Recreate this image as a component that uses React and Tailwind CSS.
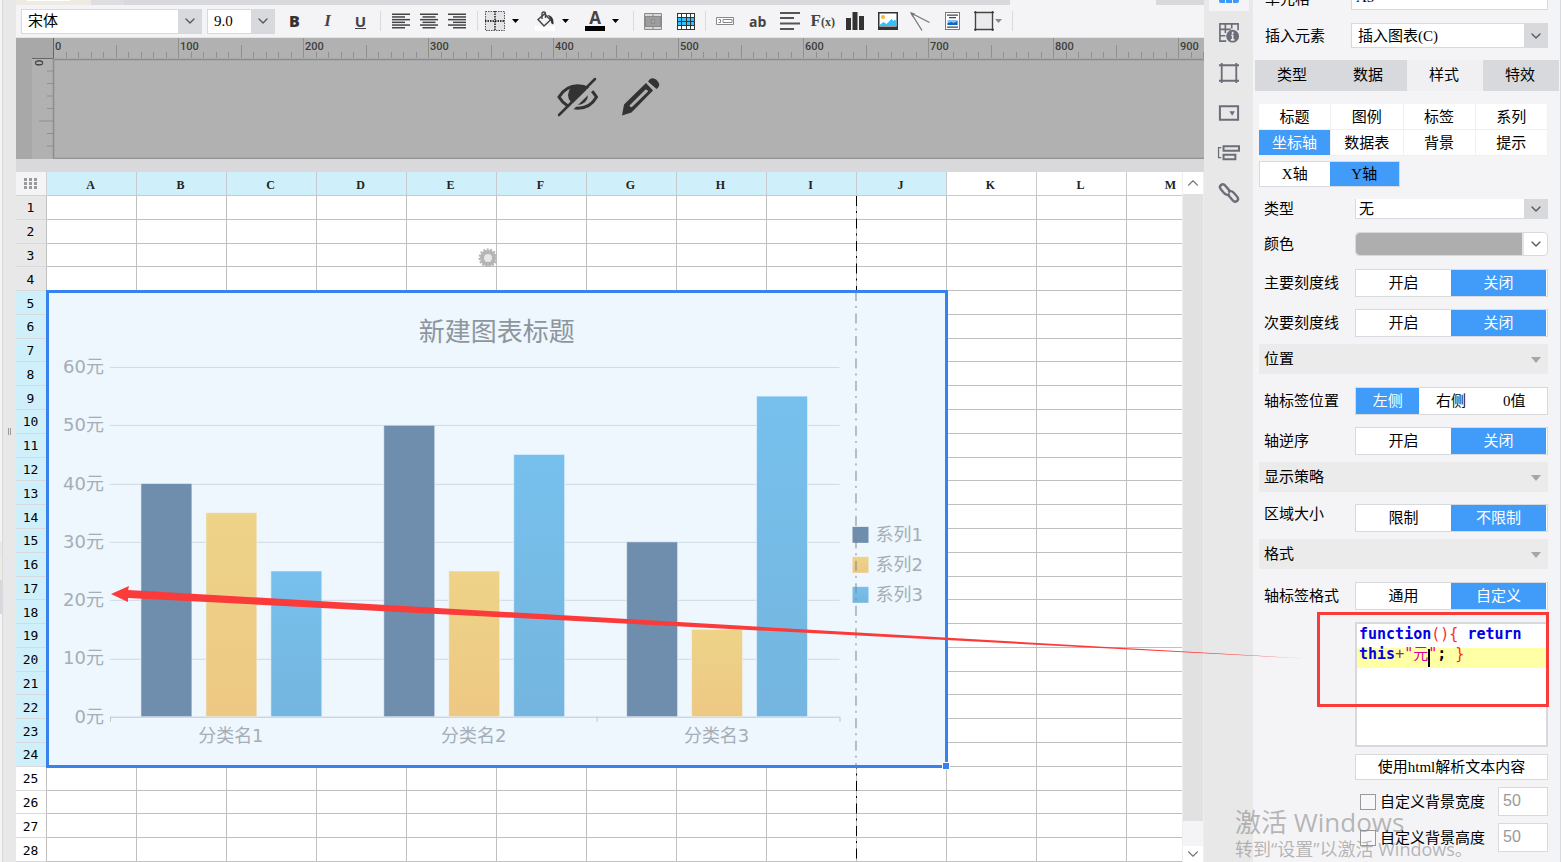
import { useState } from 'react'
import clsx from 'clsx'
import { ChevronDown, ChevronUp } from 'lucide-react'

const COLUMNS = ['A', 'B', 'C', 'D', 'E', 'F', 'G', 'H', 'I', 'J', 'K', 'L', 'M']
const ROWS = Array.from({ length: 28 }, (_, i) => i + 1)

const SERIES = [
  { name: '系列1', fill: '#6f8dac', values: [40, 50, 30] },
  { name: '系列2', fill: 'url(#yellow)', values: [35, 25, 15] },
  { name: '系列3', fill: 'url(#blue)', values: [25, 45, 55] },
]
const CATEGORIES = ['分类名1', '分类名2', '分类名3']

const yOf = (value) => 426 - (value * 350) / 60

function Caret({ className }) {
  return (
    <svg className={clsx('w-[7px] h-[4px] shrink-0', className)} viewBox="0 0 7 4" fill="currentColor" aria-hidden="true">
      <path d="M0 0h7L3.5 4z" />
    </svg>
  )
}

function SelectBox({ id, label, options, className }) {
  return (
    <div className={clsx('relative border border-[#d7d9dd]', className)}>
      <select
        id={id}
        aria-label={label}
        className="block w-full h-full appearance-none bg-white pl-1.5 pr-6 text-[15px] leading-[18px] text-black outline-none"
      >
        {options.map((option) => (
          <option key={option}>{option}</option>
        ))}
      </select>
      <span className="pointer-events-none absolute inset-y-0 right-0 flex w-[23px] items-center justify-center bg-[#d7d9dd]">
        <ChevronDown className="w-4 h-4 text-[#55585e]" strokeWidth={2} />
      </span>
    </div>
  )
}

function Separator({ className }) {
  return <span className={clsx('w-px h-5 shrink-0 bg-[#d9dade]', className)} />
}

function ToolButton({ title, className, children }) {
  return (
    <button type="button" title={title} aria-label={title} className={clsx('flex h-7 shrink-0 items-center', className)}>
      {children}
    </button>
  )
}

function AlignIcon({ kind }) {
  const lines = [18, 13, 18, 13, 18, 13]
  return (
    <svg width="18" height="16" viewBox="0 0 18 16" aria-hidden="true">
      {lines.map((w, i) => {
        const x = kind === 'left' ? 0 : kind === 'right' ? 18 - w : (18 - w) / 2
        return <rect key={i} x={x} y={i * 2.7 + 0.5} width={w} height="1.5" fill="#444" />
      })}
    </svg>
  )
}

function Toolbar() {
  return (
    <div className="flex h-[33px] shrink-0 items-center bg-[#f4f4f7] pl-[5px] border-b border-[#e4e4e8]">
      <SelectBox label="字体" options={['宋体']} className="w-[181px] h-[25px] shrink-0" />
      <SelectBox label="字号" options={['9.0']} className="w-[68px] h-[25px] shrink-0 ml-[5px]" />

      <ToolButton title="加粗" className="ml-[3px] w-[33px] justify-center">
        <span className="font-[Open_Sans] text-[16px] font-extrabold text-[#333]">B</span>
      </ToolButton>
      <ToolButton title="倾斜" className="w-[33px] justify-center">
        <span className="font-[Liberation_Serif] text-[17px] font-bold italic text-[#444]">I</span>
      </ToolButton>
      <ToolButton title="下划线" className="w-[33px] justify-center">
        <span className="border-b border-[#444] font-[Open_Sans] text-[15px] leading-[14px] font-bold text-[#444]">U</span>
      </ToolButton>
      <Separator className="ml-[3px]" />

      <ToolButton title="左对齐" className="ml-[6px] w-7 justify-center"><AlignIcon kind="left" /></ToolButton>
      <ToolButton title="居中" className="w-7 justify-center"><AlignIcon kind="center" /></ToolButton>
      <ToolButton title="右对齐" className="w-7 justify-center"><AlignIcon kind="right" /></ToolButton>
      <Separator className="ml-[6px]" />

      <ToolButton title="边框" className="ml-[7px] w-[50px] gap-[7px]">
        <svg width="20" height="20" viewBox="0 0 20 20" fill="none" stroke="#333" strokeDasharray="1.5 1" aria-hidden="true">
          <path d="M.5 .5h19v19H.5z" fill="#e4e4e8" stroke="#555" />
          <path d="M0 10h20M10 0v20" stroke="#000" strokeWidth="1.3" />
        </svg>
        <Caret className="text-black" />
      </ToolButton>
      <ToolButton title="填充颜色" className="w-[50px] gap-[7px]">
        <svg width="20" height="20" viewBox="0 0 20 20" fill="none" stroke="#444" strokeWidth="1.4" aria-hidden="true">
          <rect x="0" y="15" width="20" height="5" fill="#fff" stroke="none" />
          <path d="M3 8.500 9.500 3l6 6-6.500 6z" fill="#f4f4f7" />
          <path d="M7 8V2.500C7 .5 10.500 .5 10.500 2.500V7" />
          <path d="M12 4c4 0 7 3 6.500 9-1 .8-2-.2-2.500-2 0-3-1.500-5-4-7z" fill="#333" stroke="none" />
        </svg>
        <Caret className="text-black" />
      </ToolButton>
      <ToolButton title="字体颜色" className="w-[48px] gap-[7px]">
        <span className="flex h-5 w-5 flex-col items-center border-b-[5px] border-black">
          <span className="font-[Open_Sans] text-[17px] leading-[14px] font-bold text-[#444]">A</span>
        </span>
        <Caret className="text-black" />
      </ToolButton>
      <Separator />

      <ToolButton title="合并单元格" className="ml-[2px] w-[33px] justify-center">
        <svg width="18" height="17" viewBox="0 0 18 17" fill="none" stroke="#8a8a8a" aria-hidden="true">
          <path d="M.5 .5h17v16H.5z" fill="#d8d8d8" />
          <path d="M0 3.5h18M0 13.5h18M9 0v3M9 14v3" />
          <rect x="1.5" y="3.5" width="15" height="10" fill="#9d9d9d" />
          <path d="M7.500 6.500h3v4h-3z" fill="#a8a8a8" stroke="#8a8a8a" />
        </svg>
      </ToolButton>
      <ToolButton title="表格" className="w-[33px] justify-center">
        <svg width="18" height="17" viewBox="0 0 18 17" aria-hidden="true">
          <rect width="18" height="17" fill="#333" />
          {[1, 5, 9, 13].map((y) =>
            [1, 5, 10, 14].map((x) => (
              <rect key={`${x}-${y}`} x={x} y={y} width={x === 5 ? 4 : 3} height="3" fill={y === 5 || y === 9 ? '#35c0f8' : '#fff'} />
            ))
          )}
        </svg>
      </ToolButton>
      <Separator className="ml-[3px]" />

      <div className="ml-[3px] grid w-[260px] shrink-0 grid-cols-8">
        <ToolButton title="文本框" className="justify-center">
          <svg width="18" height="8" viewBox="0 0 18 8" fill="none" stroke="#888" aria-hidden="true">
            <path d="M.5 .5h17v7H.5z" fill="#fff" />
            <path d="M2.500 2.500h2v3h-2M7 2.500h9v3H7z" />
          </svg>
        </ToolButton>
        <ToolButton title="文本" className="justify-center">
          <span className="font-[Open_Sans] text-[14px] font-bold text-[#444]">ab</span>
        </ToolButton>
        <ToolButton title="段落" className="justify-center">
          <svg width="20" height="18" viewBox="0 0 20 18" fill="#555" aria-hidden="true">
            <path d="M0 0h20v2H0zM0 5h14v2H0zM0 10.500h20v2H0zM0 16h14v2H0z" />
          </svg>
        </ToolButton>
        <ToolButton title="公式" className="justify-center">
          <span className="font-[Liberation_Serif] text-[17px] font-bold text-[#444]">
            F<span className="text-[12px]">(x)</span>
          </span>
        </ToolButton>
        <ToolButton title="图表" className="justify-center">
          <svg width="18" height="18" viewBox="0 0 18 18" fill="#333" aria-hidden="true">
            <path d="M0 6h5v12H0zM6.500 0h5v18h-5zM13 4h5v14h-5z" />
          </svg>
        </ToolButton>
        <ToolButton title="图片" className="justify-center">
          <svg width="20" height="18" viewBox="0 0 20 18" aria-hidden="true">
            <rect x=".75" y=".75" width="18.5" height="16.5" fill="#fff" stroke="#333" strokeWidth="1.5" />
            <circle cx="5" cy="5" r="2" fill="#fbb829" />
            <path d="M1.500 13l4-3 3 2 5-5 2 2 1.500-1.500 1.500 2V14H1.500z" fill="#35c0f8" />
            <path d="M1 14.500h18v3H1z" fill="#333" />
          </svg>
        </ToolButton>
        <ToolButton title="斜线" className="justify-center">
          <svg width="20" height="19" viewBox="0 0 20 19" fill="none" stroke="#777" strokeWidth="1.3" aria-hidden="true">
            <path d="M1 1l18.500 9.500M1 1l11 17.500" />
            <path d="M0 0l5 1.500L2.500 5z" fill="#777" stroke="none" />
          </svg>
        </ToolButton>
        <ToolButton title="子报表" className="justify-center">
          <svg width="15" height="18" viewBox="0 0 15 18" aria-hidden="true">
            <rect x=".5" y=".5" width="14" height="17" fill="#fff" stroke="#777" />
            <path d="M2 2.500h11v1.300H2zM4 5h7v1.300H4zM2 14.500h11v1.300H2z" fill="#444" />
            <rect x="2.5" y="8" width="10" height="5" fill="#7ec3fa" />
            <path d="M2.500 13v-2l4-1 2 1 4-2v4z" fill="#1565c0" />
          </svg>
        </ToolButton>
      </div>
      <ToolButton title="悬浮元素" className="ml-[5px]">
        <svg width="21" height="20" viewBox="0 0 21 20" fill="none" stroke="#444" strokeWidth="1.4" aria-hidden="true">
          <path d="M2.500 2.500h15v15h-15z" fill="#ebebee" stroke="none" />
          <path d="M0 1.500h20M0 18.500h20M1.500 0v20M18.500 0v20" />
        </svg>
        <Caret className="text-[#888]" />
      </ToolButton>
      <Separator className="ml-[10px]" />
    </div>
  )
}

function Ruler() {
  const ticks = Array.from({ length: 93 }, (_, i) => i)
  return (
    <div className="relative h-[121px] shrink-0 overflow-hidden bg-[#b1b1b1]">
      <svg className="block h-full w-[1188px]" viewBox="0 0 1188 121" aria-hidden="true">
        <rect width="16" height="121" fill="#a8a8a8" />
        <rect width="37" height="20" fill="#a8a8a8" />
        {ticks.map((i) => {
          const x = Math.round(37 + i * 12.5) + 0.5
          const top = i % 10 === 0 ? 0 : i % 5 === 0 ? 7 : 14
          return <path key={i} d={`M${x} ${top}V20`} stroke="#8f8f8f" />
        })}
        {[1, 2, 3, 4, 5, 6, 7].map((i) => (
          <path key={i} d={`M${i === 5 ? 23 : 31} ${20.5 + i * 12.5}H37`} stroke="#8f8f8f" />
        ))}
        <path d="M16 20.500h21M37.500 0v20" stroke="#666" />
        <path d="M37 21.500h1151" stroke="#8c8c8c" strokeWidth="1.5" />
        <path d="M37.500 20v100" stroke="#8c8c8c" strokeWidth="1.5" />
        <path d="M37 120.300h1151" stroke="#8c8c8c" />
        {[0, 1, 2, 3, 4, 5, 6, 7, 8, 9].map((i) => (
          <text key={i} x={i === 9 ? 1164 : 39 + i * 125} y="12" fontSize="11" fontWeight="500" fontFamily="Roboto, sans-serif" fill="#3d3d3d">
            {i * 100}
          </text>
        ))}
        <text transform="translate(27 28) rotate(-90)" fontSize="11" fontWeight="500" fontFamily="Roboto, sans-serif" fill="#3d3d3d">0</text>
      </svg>
      <div className="absolute inset-x-0 top-[39px] flex justify-center gap-[22px] pr-[2px]">
        <button type="button" aria-label="隐藏" className="h-10 w-[42px]">
          <svg width="42" height="40" viewBox="0 0 42 40" fill="none" aria-hidden="true">
            <path d="M2 20C11 5 31 5 39.500 20C31 35 11 35 2 20z" stroke="#333" strokeWidth="3" />
            <circle cx="21" cy="18" r="10" fill="#333" />
            <path d="M11 14c-3 4-1 9 0 10" stroke="#b1b1b1" strokeWidth="1.5" />
            <path d="M5 40L42 4" stroke="#b1b1b1" strokeWidth="5" />
            <path d="M2 38L38 2" stroke="#333" strokeWidth="2.5" strokeLinecap="round" />
          </svg>
        </button>
        <button type="button" aria-label="编辑" className="h-10 w-10">
          <svg width="40" height="40" viewBox="0 0 40 40" fill="#333" aria-hidden="true">
            <path fillRule="evenodd" d="M1 38.500L3 27.500 25 6l7 7.500L10.500 35.500zM8.500 28.500q1 3 3 1L27 14.500q0-2-2.500-2z" />
            <path d="M27 4.500c3-5 7-3 9-1s4 5-.5 8.500z" />
          </svg>
        </button>
      </div>
    </div>
  )
}

function BarChart() {
  return (
    <svg className="block h-full w-full" viewBox="2 2 896 472" preserveAspectRatio="xMinYMin meet" fontFamily="'DejaVu Sans', 'Noto Sans CJK SC', sans-serif">
      <defs>
        <linearGradient id="yellow" x1="0" y1="0" x2="0" y2="1">
          <stop offset="0" stopColor="#eed388" />
          <stop offset="1" stopColor="#edc884" />
        </linearGradient>
        <linearGradient id="blue" x1="0" y1="0" x2="0" y2="1">
          <stop offset="0" stopColor="#77c0ed" />
          <stop offset="1" stopColor="#74b6df" />
        </linearGradient>
      </defs>

      <text x="450" y="50" fontSize="26" textAnchor="middle" fill="#8d959d">新建图表标题</text>

      {[60, 50, 40, 30, 20, 10, 0].map((value) => (
        <g key={value}>
          <path d={`M63 ${Math.round(yOf(value)) + 0.5}H793`} stroke={value === 0 ? '#bcc7d3' : '#d0dae4'} />
          <text x="57" y={yOf(value) + 6} fontSize="18" textAnchor="end" fill="#a5adb6">{value}元</text>
        </g>
      ))}
      <path d="M63.500 426v5M550.500 426v5M793.500 426v5" stroke="#bcc7d3" />

      {CATEGORIES.map((category, c) => (
        <g key={category}>
          {SERIES.map((series, s) => (
            <rect
              key={series.name}
              x={94 + c * 243 + s * 65}
              y={yOf(series.values[c])}
              width="51"
              height={426 - yOf(series.values[c])}
              fill={series.fill}
              stroke="#eef6fe"
              strokeOpacity="0.6"
            />
          ))}
          <text x={184 + c * 243} y="451" fontSize="18" textAnchor="middle" fill="#a5adb6">{category}</text>
        </g>
      ))}

      {SERIES.map((series, i) => (
        <g key={series.name}>
          <rect x="806" y={236 + i * 30} width="16" height="16" fill={series.fill} />
          <text x="829" y={250 + i * 30} fontSize="18" fill="#a5adb6">{series.name}</text>
        </g>
      ))}

      <path d="M809.500 0v476" stroke="#7b858e" strokeDasharray="10 5 2 5.5" />
    </svg>
  )
}

function Sheet() {
  return (
    <div className="flex min-h-0 flex-1">
      <div className="relative min-w-0 flex-1 overflow-hidden bg-white">
        <table className="h-full w-[1201px] table-fixed border-separate border-spacing-0">
          <thead>
            <tr>
              <th className="h-6 w-[31px] border-r border-b border-[#d0d2d6] bg-[#f4f4f7] p-0">
                <svg className="mx-auto" width="14" height="12" viewBox="0 0 14 12" fill="#999" aria-hidden="true">
                  <path d="M0 0h3v3H0zM5 0h3v3H5zM10 0h3v3h-3zM0 4h3v3H0zM5 4h3v3H5zM10 4h3v3h-3zM0 8h3v3H0zM5 8h3v3H5zM10 8h3v3h-3z" />
                </svg>
              </th>
              {COLUMNS.map((column, i) => (
                <th
                  key={column}
                  scope="col"
                  className={clsx(
                    'h-6 w-[90px] border-r border-b border-[#c8cacd] pt-[3px] pr-[2px] pb-0 pl-0 font-[Liberation_Serif] text-[12px] leading-4 font-bold text-[#222]',
                    i < 10 ? 'bg-[#cff0fb]' : 'bg-white'
                  )}
                >
                  {column}
                </th>
              ))}
            </tr>
          </thead>
          <tbody>
            {ROWS.map((row) => (
              <tr key={row}>
                <th
                  scope="row"
                  className={clsx(
                    'border-b border-r border-b-[#d8d9dc] border-r-[#c0c0c0] pt-[2px] pr-px pb-0 pl-0 font-[DejaVu_Sans_Mono] text-[13px] leading-4 font-normal text-black',
                    row < 5 ? 'bg-[#e8e8e8]' : row < 25 ? 'bg-[#cff0fb]' : 'bg-white'
                  )}
                >
                  {row}
                </th>
                {COLUMNS.map((column) => (
                  <td key={column} className="border-r border-b border-[#c0c0c0] p-0" />
                ))}
              </tr>
            ))}
          </tbody>
        </table>

        {/* floating layer: page break line, spinner and chart, snapped to the cells */}
        <div className="absolute inset-x-0 top-6 bottom-0 grid grid-cols-[31px_repeat(13,90px)] grid-rows-[repeat(28,minmax(0,1fr))]">
          <svg className="col-start-10 row-start-1 row-end-29 h-full w-px justify-self-end" aria-hidden="true">
            <line x1="0.5" y1="0" x2="0.5" y2="100%" stroke="#000" strokeWidth="2" strokeDasharray="10 5 2 5.5" />
          </svg>
          <svg className="col-start-6 row-start-3 justify-self-end self-end" width="20" height="20" viewBox="0 0 20 20" aria-hidden="true">
            <circle cx="11" cy="11" r="8.5" fill="none" stroke="#b5b5b5" strokeWidth="2" strokeDasharray="2 1.5" />
            <circle cx="11" cy="11" r="6" fill="#e8e8e8" stroke="#b5b5b5" strokeWidth="4" />
          </svg>
          <div className="relative col-start-2 col-span-10 row-start-5 row-end-25 -m-px border-[3px] border-[#3683ee] bg-[#eef6fe]">
            <BarChart />
            <span className="absolute -right-[5px] -bottom-[5px] h-2 w-2 border border-white bg-[#3683ee]" />
          </div>
        </div>
      </div>

      <div className="flex w-[22px] shrink-0 flex-col border-x border-[#eeeeee] bg-[#f4f4f7]">
        <button type="button" aria-label="向上滚动" className="flex h-[22px] items-center justify-center bg-white">
          <ChevronUp className="w-[18px] h-[18px] text-[#777]" strokeWidth={1.5} />
        </button>
        <div className="flex-1 bg-[#e1e1e1]" />
        <button type="button" aria-label="向下滚动" className="mt-[25px] flex h-4 items-center justify-center bg-white">
          <ChevronDown className="w-[18px] h-[18px] text-[#777]" strokeWidth={1.5} />
        </button>
      </div>
    </div>
  )
}

function RailButton({ label, children }) {
  return (
    <button type="button" aria-label={label} className="flex h-10 w-10 items-center justify-center">
      <svg width="20" height="20" viewBox="0 0 22 22" fill="none" stroke="#6b6e78" strokeWidth="2" className="overflow-visible" aria-hidden="true">
        {children}
      </svg>
    </button>
  )
}

function IconRail() {
  return (
    <nav className="flex w-[49px] shrink-0 flex-col items-center bg-[#e8e8e8]">
      <button type="button" aria-label="单元格元素" className="mb-[2px] flex h-[11px] w-10 justify-center bg-[#f4f4f7]">
        <svg width="20" height="4" viewBox="0 0 20 4" fill="#3d98f7" aria-hidden="true">
          <path d="M0 0h6v3H2Q0 3 0 1zM7 0h6v3H7zM14 0h6v1q0 2-2 2h-4z" />
        </svg>
      </button>
      <RailButton label="单元格属性">
        <path d="M8 20H1V1h20v7M1 7h12M7 1v10M14 1v5M1 14h6" strokeWidth="1.8" />
        <ellipse cx="15" cy="14.5" rx="7" ry="7" fill="#6b6e78" stroke="none" />
        <path d="M15 9.500v2.500M13.500 13.500H15v5M13 18.500h4" stroke="#e8e8e8" strokeWidth="1.8" />
      </RailButton>
      <RailButton label="悬浮元素">
        <path d="M0 2.500h22M0 19.500h22M3 0v22M19 0v22" strokeWidth="2" />
      </RailButton>
      <RailButton label="控件设置">
        <path d="M1 3.500h20v15H1z" strokeWidth="2.2" />
        <path d="M11.500 9h6l-3 5z" fill="#6b6e78" stroke="none" />
      </RailButton>
      <RailButton label="条件属性">
        <path d="M5 3.500h17v5H5zM5 13h13v5H5z" strokeWidth="2.200" />
        <path d="M2.500 5H-.5v11h3" strokeWidth="1.4" />
      </RailButton>
      <RailButton label="超级链接">
        <path d="M12.500 9.500L7 3C4-.5-1 3 2 7l4 4.500c2 2 4 2 5.500 0" strokeWidth="2.6" />
        <path d="M9.500 12.500L15 19c3 3.500 8 0 5-4l-4-4.500c-2-2-4-2-5.500 0" strokeWidth="2.6" />
      </RailButton>
    </nav>
  )
}

function Field({ label, htmlFor, className, children }) {
  return (
    <div className={clsx('flex items-center', className)}>
      <label htmlFor={htmlFor} className="w-[96px] shrink-0 pl-[5px] text-[15px] leading-5">{label}</label>
      {children}
    </div>
  )
}

function Segmented({ label, options, initial }) {
  const [active, setActive] = useState(initial)
  return (
    <div role="group" aria-label={label} className="flex h-full flex-1 border border-[#d7d9dd] bg-white pr-px">
      {options.map((option) => (
        <button
          key={option}
          type="button"
          aria-pressed={option === active}
          onClick={() => setActive(option)}
          className={clsx('flex-1 text-[15px] leading-5', option === active ? 'bg-[#419bf9] text-white' : 'text-black')}
        >
          {option}
        </button>
      ))}
    </div>
  )
}

function SectionHeader({ children }) {
  return (
    <button type="button" className="mt-[7px] flex h-[30px] w-full items-center justify-between bg-[#ebebeb] pt-px pl-[5px] pr-[7px] text-[15px]">
      {children}
      <svg width="10" height="6" viewBox="0 0 10 6" fill="#a6a6a6" aria-hidden="true">
        <path d="M0 0h10L5 6z" />
      </svg>
    </button>
  )
}

const TOKENS = /(function|return|this)|([(){}])|("[^"]*")|(\+)/g

function highlight(code) {
  const parts = []
  let last = 0
  for (const match of code.matchAll(TOKENS)) {
    if (match.index > last) parts.push(code.slice(last, match.index))
    const color = match[1] ? 'text-[#0000e6]' : match[2] ? 'font-normal text-[#ff2a1a]' : match[3] ? 'font-normal text-[#dc009c]' : 'font-normal text-[#804040]'
    parts.push(<span key={match.index} className={color}>{match[0]}</span>)
    last = match.index + match[0].length
  }
  parts.push(code.slice(last))
  return parts
}

function CodeEditor() {
  const [code, setCode] = useState('function(){ return\nthis+"元"; }')
  return (
    <div className="relative mt-3 ml-[96px] h-[125px] border-2 border-[#d7d9dd] bg-white font-[DejaVu_Sans_Mono,Noto_Sans_CJK_SC] text-[15px] leading-5">
      <div className="absolute inset-x-0 top-6 h-5 bg-[#ffffa6]" />
      <pre aria-hidden="true" className="relative whitespace-pre-wrap pl-[2px] font-[inherit] font-bold">{highlight(code)}</pre>
      <textarea
        aria-label="轴标签格式"
        spellCheck={false}
        value={code}
        onChange={(e) => setCode(e.target.value)}
        className="absolute inset-0 h-full w-full resize-none bg-transparent pl-[2px] text-transparent caret-black outline-none"
      />
      <span className="absolute left-[71px] top-[25px] h-[18px] w-[2px] bg-black" />
      <div className="pointer-events-none absolute -left-[40px] -top-[12px] -right-[3px] h-[95px] border-[3px] border-[#fb3a3a]" />
    </div>
  )
}

function SizeOption({ id, label }) {
  return (
    <div className="mt-[7px] ml-[96px] flex h-[29px] items-center">
      <input id={id} type="checkbox" className="ml-[5px] h-4 w-4 shrink-0 appearance-none border border-[#999] bg-[#f7f7f9] checked:bg-[#419bf9]" />
      <label htmlFor={id} className="ml-1 flex-1 text-[15px] leading-5 whitespace-nowrap">{label}</label>
      <input
        type="text"
        aria-label={label}
        defaultValue="50"
        className="h-full w-[50px] shrink-0 border border-[#d7d9dd] bg-white pl-1 pb-px font-[Liberation_Sans] text-[16px] text-[#999] outline-none"
      />
    </div>
  )
}

function PropertyPanel() {
  const [tab, setTab] = useState('样式')
  const [group, setGroup] = useState('坐标轴')
  const [axis, setAxis] = useState('Y轴')

  return (
    <aside className="flex w-[308px] shrink-0 flex-col overflow-hidden border-r border-[#d7d9dd] bg-[#f4f4f7] font-[Liberation_Serif,Noto_Sans_CJK_SC] text-black">
      <div className="pl-[12px] pr-[12px]">
        <div className="flex h-[10px] items-end overflow-hidden">
          <label htmlFor="cell" className="w-[86px] shrink-0 pb-px text-[15px] leading-5">单元格</label>
          <input id="cell" type="text" defaultValue="A5" className="h-[26px] min-w-0 flex-1 shrink-0 border border-[#d7d9dd] bg-white pl-1 text-[15px] leading-5 outline-none" />
        </div>
        <div className="mt-[13px] flex h-[25px] items-center">
          <label htmlFor="element" className="w-[86px] shrink-0 text-[15px] leading-5">插入元素</label>
          <SelectBox id="element" options={['插入图表(C)']} className="h-full flex-1" />
        </div>
      </div>

      <div role="tablist" className="mt-3 ml-[2px] mr-px grid h-[31px] shrink-0 grid-cols-4">
        {['类型', '数据', '样式', '特效'].map((name) => (
          <button
            key={name}
            type="button"
            role="tab"
            aria-selected={name === tab}
            onClick={() => setTab(name)}
            className={clsx('pr-[2px] text-[15px]', name === tab ? 'bg-[#f0f0f2]' : 'bg-[#d7d9dd]')}
          >
            {name}
          </button>
        ))}
      </div>

      <div className="pl-[6px] pr-[12px]">
        <div className="mt-[13px] grid grid-cols-4 bg-white">
          {['标题', '图例', '标签', '系列', '坐标轴', '数据表', '背景', '提示'].map((name) => (
            <button
              key={name}
              type="button"
              aria-pressed={name === group}
              onClick={() => setGroup(name)}
              className={clsx('h-[26px] border-r border-b border-[#f0f0f2] pt-px text-[15px]', name === group ? 'bg-[#419bf9] text-white' : 'bg-white')}
            >
              {name}
            </button>
          ))}
        </div>

        <div className="mt-[5px] flex h-[26px] w-[141px] border border-[#d7d9dd] bg-white">
          {['X轴', 'Y轴'].map((name) => (
            <button
              key={name}
              type="button"
              aria-pressed={name === axis}
              onClick={() => setAxis(name)}
              className={clsx('flex-1 text-[15px]', name === axis && 'bg-[#419bf9]')}
            >
              {name}
            </button>
          ))}
        </div>

        <Field label="类型" htmlFor="axis-type" className="mt-3 h-5">
          <SelectBox id="axis-type" options={['无']} className="h-full flex-1 border-t-0 [&>select]:pl-[3px]" />
        </Field>
        <Field label="颜色" htmlFor="axis-color" className="mt-[13px] h-6">
          <button id="axis-color" type="button" className="flex h-full flex-1 rounded-sm border border-[#d7d9dd] bg-white">
            <span className="h-full flex-1 rounded-l-sm border-r-2 border-[#e4e4e8] bg-[#aeaeae]" />
            <span className="flex h-full w-[23px] items-center justify-center">
              <ChevronDown className="w-4 h-4 text-[#55585e]" strokeWidth={2} />
            </span>
          </button>
        </Field>
        <Field label="主要刻度线" className="mt-[13px] h-7">
          <Segmented label="主要刻度线" options={['开启', '关闭']} initial="关闭" />
        </Field>
        <Field label="次要刻度线" className="mt-3 h-7">
          <Segmented label="次要刻度线" options={['开启', '关闭']} initial="关闭" />
        </Field>

        <SectionHeader>位置</SectionHeader>
        <Field label="轴标签位置" className="mt-[13px] h-7">
          <Segmented label="轴标签位置" options={['左侧', '右侧', '0值']} initial="左侧" />
        </Field>
        <Field label="轴逆序" className="mt-3 h-7">
          <Segmented label="轴逆序" options={['开启', '关闭']} initial="关闭" />
        </Field>

        <SectionHeader>显示策略</SectionHeader>
        <Field label="区域大小" className="mt-3 h-7 items-start">
          <Segmented label="区域大小" options={['限制', '不限制']} initial="不限制" />
        </Field>

        <SectionHeader>格式</SectionHeader>
        <Field label="轴标签格式" className="mt-[13px] h-7">
          <Segmented label="轴标签格式" options={['通用', '自定义']} initial="自定义" />
        </Field>
        <CodeEditor />
        <div className="mt-[7px] ml-[96px] flex">
          <button type="button" className="h-[26px] flex-1 border border-[#d7d9dd] bg-white text-[15px] leading-5">使用html解析文本内容</button>
        </div>
        <SizeOption id="bg-width" label="自定义背景宽度" />
        <SizeOption id="bg-height" label="自定义背景高度" />
      </div>
    </aside>
  )
}

function App() {
  return (
    <div className="relative flex h-screen overflow-hidden bg-[#e8e8e8] font-[Liberation_Serif,Noto_Sans_CJK_SC]">
      {/* collapsed left pane and its splitter */}
      <div className="flex w-4 shrink-0">
        <div className="flex w-[3px] flex-col border-r border-[#d7d9dd]">
          <div className="h-[542px] bg-[#f4f4f7]" />
          <div className="h-[13px] bg-[#e8e8e8]" />
          <div className="h-[25px] bg-[#f0ebe2]" />
          <div className="h-[34px] bg-[#d7d9dd]" />
          <div className="flex-1 bg-[#f4f4f7]" />
        </div>
        <div className="flex flex-1 items-center justify-center gap-px">
          <span className="h-[7px] w-px bg-[#999]" />
          <span className="h-[7px] w-px bg-[#999]" />
        </div>
      </div>

      <main className="flex min-w-0 flex-1 flex-col bg-[#d9d9dc]">
        <div className="flex h-[5px] shrink-0 bg-[#d7d9dd]">
          <div className="w-[75px] bg-[#f0ebe2] pl-[11px]">
            <div className="h-px w-[43px] bg-white" />
          </div>
          <div className="w-[33px] bg-[#dedee0]" />
          <div className="flex-1" />
          <div className="w-[146px] bg-[#f4f4f7]" />
          <div className="w-[48px]" />
        </div>
        <Toolbar />
        <Ruler />
        <div className="h-[13px] shrink-0" />
        <Sheet />
      </main>

      <IconRail />
      <PropertyPanel />

      <svg className="pointer-events-none absolute inset-0 h-full w-full" aria-hidden="true">
        <path d="M111 594L129 586L128 590L1305 658.500L128 598V602Z" fill="#fb3a3a" />
      </svg>
      <div className="pointer-events-none absolute right-[92px] bottom-0 w-[234px] whitespace-nowrap font-[Open_Sans,Noto_Sans_CJK_SC] text-[#8a8a8a]/60">
        <p className="text-[26px] leading-7">激活 Windows</p>
        <p className="text-[18px] leading-[26px]">转到“设置”以激活 Windows。</p>
      </div>
    </div>
  )
}

export default App
